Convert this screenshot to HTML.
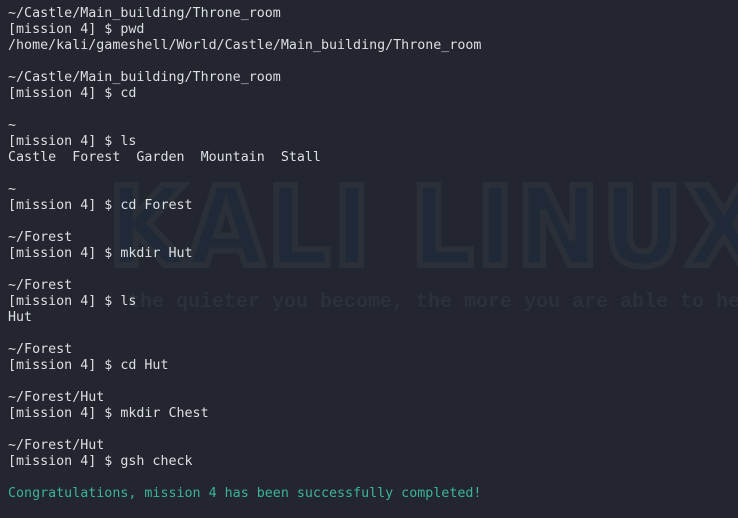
<html><head><style>
html,body{margin:0;width:738px;height:518px;overflow:hidden;background:#23262e;}
.f{position:relative;width:738px;height:518px;overflow:hidden;font-family:"Liberation Mono",monospace;}
.wm{position:absolute;left:108px;top:172px;font:bold 110px "DejaVu Sans Condensed","Liberation Sans",sans-serif;color:#1f2937;-webkit-text-stroke:6px #2b3038;letter-spacing:3px;white-space:nowrap;line-height:110px;}
.tag{position:absolute;left:128px;top:291px;font:bold 20px "Liberation Mono",monospace;color:#2c3139;white-space:nowrap}
pre{position:absolute;left:8px;top:6px;margin:0;font-size:13.33px;line-height:16px;color:#dcdfe4;}
.g{color:#3bb39a}
</style></head><body><div class="f">
<div class="wm">KALI LINUX</div>
<div class="tag">the quieter you become, the more you are able to hear</div>
<pre>~/Castle/Main_building/Throne_room
[mission 4] $ pwd
/home/kali/gameshell/World/Castle/Main_building/Throne_room

~/Castle/Main_building/Throne_room
[mission 4] $ cd

~
[mission 4] $ ls
Castle  Forest  Garden  Mountain  Stall

~
[mission 4] $ cd Forest

~/Forest
[mission 4] $ mkdir Hut

~/Forest
[mission 4] $ ls
Hut

~/Forest
[mission 4] $ cd Hut

~/Forest/Hut
[mission 4] $ mkdir Chest

~/Forest/Hut
[mission 4] $ gsh check

<span class="g">Congratulations, mission 4 has been successfully completed!</span></pre>
</div></body></html>
